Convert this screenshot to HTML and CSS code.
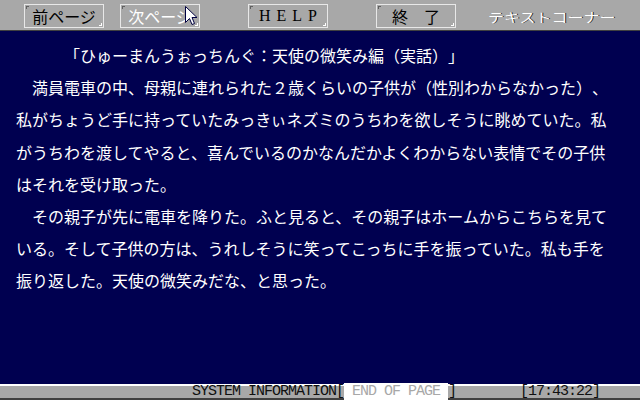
FILE: index.html
```html
<!DOCTYPE html>
<html lang="ja">
<head>
  <meta charset="UTF-8" />
  <title>テキストコーナー</title>
  <link rel="stylesheet" href="styles.css">
</head>
<body>
  <div class="screen">
    <div class="toolbar">
      <span class="btn">前ページ</span>
      <span class="btn btn-off">次ページ</span>
      <span class="btn btn-help">HELP</span>
      <span class="btn btn-quit">終　了</span>
      <span class="corner-title">テキストコーナー</span>
      <svg class="cursor" width="13" height="20" viewBox="0 0 13 20">
        <path d="M0.5 0.5 L0.5 16.5 L4.5 12.5 L7 18.5 L9.5 17.5 L7 11.5 L12 11.5 Z" fill="#fff" stroke="#000040" stroke-width="1" />
      </svg>
    </div>

    <div class="page">
      <p class="title">「ひゅーまんうぉっちんぐ：天使の微笑み編（実話）」</p>
      <p class="para">満員電車の中、母親に連れられた２歳くらいの子供が（性別わからなかった）、私がちょうど手に持っていたみっきぃネズミのうちわを欲しそうに眺めていた。私がうちわを渡してやると、喜んでいるのかなんだかよくわからない表情でその子供はそれを受け取った。</p>
      <p class="para">その親子が先に電車を降りた。ふと見ると、その親子はホームからこちらを見ている。そして子供の方は、うれしそうに笑ってこっちに手を振っていた。私も手を振り返した。天使の微笑みだな、と思った。</p>
    </div>

    <div class="status"><span>SYSTEM INFORMATION[</span><span class="status-page"> END OF PAGE </span><span>]        [17:43:22]</span></div>
  </div>
</body>
</html>
```

FILE: styles.css
```css
:root {
  --grey: #a8a8a8;
  --navy: #000050;
  --dark: #404040;
}

body {
  margin: 0;
  background: var(--navy);
  font-family: "Noto Sans CJK JP", "Liberation Sans", sans-serif;
}

.screen {
  width: 640px;
  height: 400px;
  display: flex;
  flex-direction: column;
  overflow: hidden;
}

/* top menu bar */
.toolbar {
  position: relative;
  height: 31px;
  background: var(--grey);
  border-bottom: 1px solid var(--dark);
  display: flex;
  align-items: flex-start;
  padding: 4px 0 0 24px;
  box-sizing: border-box;
}

.btn {
  position: relative;
  width: 80px;
  height: 24px;
  box-sizing: border-box;
  border: 1px solid #e8e8e8;
  display: flex;
  align-items: center;
  justify-content: center;
  font-size: 16px;
  line-height: 16px;
  color: #000;
  margin-right: 16px;
}

.btn::before {
  content: "";
  position: absolute;
  top: 1px;
  left: 1px;
  width: 2px;
  height: 2px;
  border-top: 1px solid #606060;
  border-left: 1px solid #606060;
}

.btn::after {
  content: "";
  position: absolute;
  bottom: 1px;
  right: 1px;
  width: 2px;
  height: 2px;
  border-bottom: 1px solid #fff;
  border-right: 1px solid #fff;
}

.btn-off {
  color: #fff;
  margin-right: 48px;
}

.btn-help {
  font-family: "Liberation Serif", serif;
  letter-spacing: 6px;
  padding-left: 6px;
  margin-right: 48px;
}

.btn-quit {
  margin-right: 32px;
}

.corner-title {
  display: inline-block;
  margin-top: 4px;
  font-size: 16px;
  line-height: 16px;
  color: #fff;
  text-shadow: 1px 1px 0 #202020;
  transform: scaleY(0.8);
}

.cursor {
  position: absolute;
  left: 185px;
  top: 6px;
}

/* text page */
.page {
  flex: 1;
  padding: 8px 16px 0;
  width: 592px;
  color: #fff;
  font-size: 16px;
  line-height: 32.2px;
  text-spacing-trim: space-all;
}

.page p {
  margin: 0;
}

.title {
  padding-left: 48px;
}

.para {
  text-indent: 1em;
}

/* bottom status line */
.status {
  height: 12px;
  border-top: 2px solid #fff;
  border-bottom: 2px solid var(--dark);
  background: var(--grey);
  padding-left: 192px;
  font-family: "Liberation Mono", monospace;
  font-size: 15px;
  letter-spacing: -1px;
  line-height: 12px;
  white-space: pre;
  color: #101010;
}

.status-page {
  background: #fff;
  color: var(--grey);
}
```
